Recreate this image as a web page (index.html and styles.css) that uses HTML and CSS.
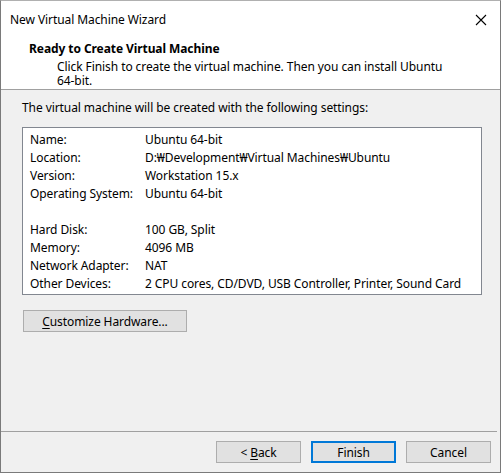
FILE: index.html
```html
<!DOCTYPE html>
<html>
<head>
<meta charset="utf-8">
<link rel="stylesheet" href="styles.css">
</head>
<body>
<div class="window">
  <div class="titlebar">
    <span class="title">New Virtual Machine Wizard</span>
    <span class="close">
      <svg width="12" height="12" viewBox="0 0 12 12"><path d="M1 1 L11 11 M11 1 L1 11" stroke="#000" stroke-width="1.1" fill="none"/></svg>
    </span>
  </div>
  <div class="header">
    <div class="h-title">Ready to Create Virtual Machine</div>
    <div class="h-desc">
      <div class="h-line">Click Finish to create the virtual machine. Then you can install Ubuntu</div>
      <div class="h-line">64-bit.</div>
    </div>
  </div>
  <div class="content">
    <div class="intro">The virtual machine will be created with the following settings:</div>
    <div class="settings">
      <div class="row"><span class="label">Name:</span><span class="value">Ubuntu 64-bit</span></div>
      <div class="row"><span class="label">Location:</span><span class="value">D:₩Development₩Virtual Machines₩Ubuntu</span></div>
      <div class="row"><span class="label">Version:</span><span class="value">Workstation 15.x</span></div>
      <div class="row"><span class="label">Operating System:</span><span class="value">Ubuntu 64-bit</span></div>
      <div class="row"><span class="label"></span><span class="value"></span></div>
      <div class="row"><span class="label">Hard Disk:</span><span class="value">100 GB, Split</span></div>
      <div class="row"><span class="label">Memory:</span><span class="value">4096 MB</span></div>
      <div class="row"><span class="label">Network Adapter:</span><span class="value">NAT</span></div>
      <div class="row"><span class="label">Other Devices:</span><span class="value">2 CPU cores, CD/DVD, USB Controller, Printer, Sound Card</span></div>
    </div>
    <button class="btn customize"><u>C</u>ustomize Hardware...</button>
  </div>
  <div class="footer">
    <button class="btn"><span>&lt; <u>B</u>ack</span></button>
    <button class="btn primary">Finish</button>
    <button class="btn">Cancel</button>
  </div>
</div>
</body>
</html>
```
FILE: styles.css
```css
html, body {
  margin: 0;
  padding: 0;
  background: #f0f0f0;
}
body {
  font-family: "Noto Sans", "Open Sans", sans-serif;
  font-size: 12px;
  letter-spacing: -0.08px;
  color: #000;
}
.window {
  box-sizing: border-box;
  width: 501px;
  height: 473px;
  border: 1px solid #7a7a7a;
  border-top-color: #b0b0b0;
  display: flex;
  flex-direction: column;
  background: #f0f0f0;
}
.titlebar {
  height: 36px;
  background: #fff;
  display: flex;
  align-items: center;
  justify-content: space-between;
  padding: 0 13px 0 9px;
}
.title {
  font-size: 12px;
}
.close {
  display: flex;
  width: 12px;
  height: 12px;
  margin-top: 1px;
}
.header {
  background: #fff;
  height: 53px;
  border-bottom: 1px solid #a0a0a0;
  padding: 4px 0 0 28px;
  box-sizing: border-box;
}
.h-title {
  font-weight: bold;
  line-height: 16px;
}
.h-desc {
  padding-left: 28px;
  margin-top: 3px;
}
.h-line {
  height: 14px;
  line-height: 14px;
}
.content {
  flex: 1;
  padding: 10px 15px 0 21px;
  border-bottom: 1px solid #a0a0a0;
  margin-right: 3px;
}
.intro {
  line-height: 16px;
}
.settings {
  margin-top: 11px;
  background: #fff;
  border: 1px solid #828790;
  height: 168px;
  box-sizing: border-box;
  padding: 3px 0 0 7px;
}
.row {
  display: flex;
  height: 18px;
  line-height: 18px;
  white-space: nowrap;
}
.label {
  width: 115px;
  flex: none;
}
.btn {
  font-family: inherit;
  font-size: 12px;
  letter-spacing: inherit;
  background: #e1e1e1;
  border: 1px solid #adadad;
  color: #000;
  height: 22px;
  padding: 0;
  box-sizing: border-box;
}
.customize {
  margin-top: 15px;
  margin-left: 1px;
  width: 164px;
}
.footer {
  height: 40px;
  display: flex;
  justify-content: flex-end;
  gap: 10px;
  padding: 9px 9px 0 0;
  box-sizing: border-box;
}
.footer .btn {
  width: 85px;
}
.footer .primary {
  border: 2px solid #0078d7;
}
u {
  text-decoration: underline;
  text-underline-offset: 2px;
}
```
